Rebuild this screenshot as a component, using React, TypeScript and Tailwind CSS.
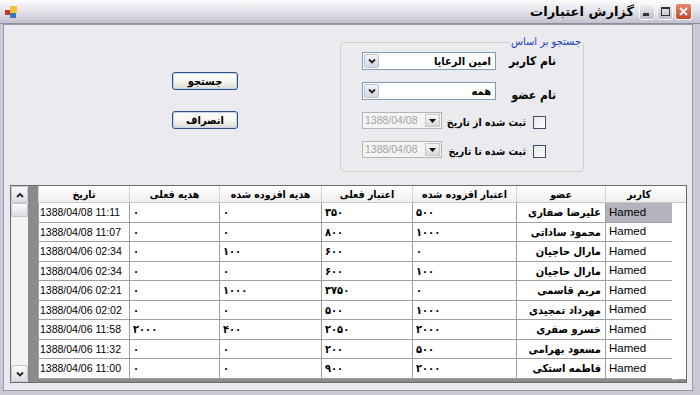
import React from 'react';

type Row = {
  user: string;
  member: string;
  addCredit: string;
  credit: string;
  addGift: string;
  gift: string;
  date: string;
};

const rows: Row[] = [
  { user: 'Hamed', member: 'علیرضا صفاری', addCredit: '۵۰۰', credit: '۳۵۰', addGift: '۰', gift: '۰', date: '1388/04/08 11:11' },
  { user: 'Hamed', member: 'محمود ساداتی', addCredit: '۱۰۰۰', credit: '۸۰۰', addGift: '۰', gift: '۰', date: '1388/04/08 11:07' },
  { user: 'Hamed', member: 'مارال حاجیان', addCredit: '۰', credit: '۶۰۰', addGift: '۱۰۰', gift: '۰', date: '1388/04/06 02:34' },
  { user: 'Hamed', member: 'مارال حاجیان', addCredit: '۱۰۰', credit: '۶۰۰', addGift: '۰', gift: '۰', date: '1388/04/06 02:34' },
  { user: 'Hamed', member: 'مریم قاسمی', addCredit: '۰', credit: '۳۷۵۰', addGift: '۱۰۰۰', gift: '۰', date: '1388/04/06 02:21' },
  { user: 'Hamed', member: 'مهرداد تمجیدی', addCredit: '۱۰۰۰', credit: '۵۰۰', addGift: '۰', gift: '۰', date: '1388/04/06 02:02' },
  { user: 'Hamed', member: 'خسرو صفری', addCredit: '۲۰۰۰', credit: '۲۰۵۰', addGift: '۴۰۰', gift: '۲۰۰۰', date: '1388/04/06 11:58' },
  { user: 'Hamed', member: 'مسعود بهرامی', addCredit: '۵۰۰', credit: '۲۰۰', addGift: '۰', gift: '۰', date: '1388/04/06 11:32' },
  { user: 'Hamed', member: 'فاطمه استکی', addCredit: '۲۰۰۰', credit: '۹۰۰', addGift: '۰', gift: '۰', date: '1388/04/06 11:00' },
];

// persian text: DejaVu has the arabic glyphs, condensed face keeps widths near Tahoma
const fa = "font-['DejaVu_Sans_Condensed','DejaVu_Sans',sans-serif] font-stretch-condensed whitespace-nowrap";
const en = "font-['Liberation_Sans',Arial,sans-serif] whitespace-nowrap";

function Chevron({ up = false }: { up?: boolean }) {
  return (
    <svg width="8" height="6" viewBox="0 0 8 6">
      <path
        d={up ? 'M1 5 L4 2 L7 5' : 'M1 1.5 L4 4.5 L7 1.5'}
        fill="none"
        stroke="#222"
        strokeWidth="1.8"
      />
    </svg>
  );
}

function Triangle() {
  return (
    <svg width="7" height="4" viewBox="0 0 7 4">
      <path d="M0 0 H7 L3.5 4 Z" fill="#111" />
    </svg>
  );
}

function ComboBox({ value }: { value: string }) {
  return (
    <div className="flex h-[18px] w-[134px] items-center border border-[#7f9db9] bg-white">
      <span className={`${fa} flex-1 pr-[4px] text-[11px] font-bold leading-none text-black`}>
        {value}
      </span>
      <div className="m-px flex h-[14px] w-[15px] items-center justify-center rounded-[2px] border border-[#b9c3d6] bg-gradient-to-b from-[#f4f5f8] to-[#d3d7e2]">
        <Chevron />
      </div>
    </div>
  );
}

function DatePicker() {
  return (
    <div className="flex h-[17px] w-[80px] items-center border border-[#b4b4b4] bg-[#f4f4f4]" dir="ltr">
      <span className={`${en} flex-1 pl-[2px] text-[10.5px] leading-none text-[#a3a3a3]`}>
        1388/04/08
      </span>
      <div className="m-px flex h-[13px] w-[15px] items-center justify-center border border-[#c8c8c8] bg-gradient-to-b from-[#f8f8f8] to-[#d8d8d8]">
        <Triangle />
      </div>
    </div>
  );
}

function CheckRow({ label }: { label: string }) {
  return (
    <div className="flex h-[17px] items-end justify-between">
      <div className="mr-[10px] flex items-center gap-[7px]">
        <div className="h-[13px] w-[13px] border border-[#3d4f6d] bg-gradient-to-br from-[#e6e6e6] to-white" />
        <span className={`${fa} text-[10.5px] font-bold leading-none text-black`}>{label}</span>
      </div>
      <DatePicker />
    </div>
  );
}

function XpButton({ label }: { label: string }) {
  return (
    <div className="flex h-[18px] w-[66px] items-center justify-center rounded-[3px] border border-[#2c4f84] bg-gradient-to-b from-white via-[#f5f5f2] to-[#dedcd2] shadow-[inset_0_0_0_1px_#c4d6f1]">
      <span className={`${fa} text-[11px] font-bold leading-none text-black`}>{label}</span>
    </div>
  );
}

function TitleButton({ kind }: { kind: 'min' | 'max' | 'close' }) {
  if (kind === 'close') {
    return (
      <div className="flex h-[17px] w-[17px] items-center justify-center rounded-[3px] border border-white bg-gradient-to-b from-[#e8866f] to-[#c3452b]">
        <svg width="11" height="11" viewBox="0 0 11 11">
          <path d="M2 2 L9 9 M9 2 L2 9" stroke="white" strokeWidth="2" />
        </svg>
      </div>
    );
  }
  return (
    <div className="flex h-[17px] w-[16px] items-center justify-center rounded-[3px] border border-white bg-gradient-to-b from-[#f4f4f8] to-[#babac9]">
      {kind === 'min' ? (
        <div className="mt-[6px] mr-[3px] h-[3px] w-[6px] bg-[#333]" />
      ) : (
        <div className="h-[9px] w-[9px] border border-t-2 border-[#333]" />
      )}
    </div>
  );
}

function ScrollButton({ up }: { up?: boolean }) {
  return (
    <div className="flex h-[17px] w-[17px] items-center justify-center rounded-[2px] border border-[#c3c6d2] bg-gradient-to-b from-[#fbfbfc] to-[#dcdde4]">
      <Chevron up={up} />
    </div>
  );
}

const cols: { key: keyof Row; title: string; w: string; cell: string }[] = [
  { key: 'user', title: 'کاربر', w: 'w-[67px]', cell: `${en} justify-start text-[11.5px] pl-[3px]` },
  { key: 'member', title: 'عضو', w: 'w-[89px]', cell: `${fa} justify-start font-bold text-[11px] pr-[4px]` },
  { key: 'addCredit', title: 'اعتبار افزوده شده', w: 'w-[104px]', cell: `${fa} justify-end font-bold text-[11px] pl-[3px]` },
  { key: 'credit', title: 'اعتبار فعلی', w: 'w-[91px]', cell: `${fa} justify-end font-bold text-[11px] pl-[3px]` },
  { key: 'addGift', title: 'هدیه افزوده شده', w: 'w-[102px]', cell: `${fa} justify-end font-bold text-[11px] pl-[3px]` },
  { key: 'gift', title: 'هدیه فعلی', w: 'w-[90px]', cell: `${fa} justify-end font-bold text-[11px] pl-[3px]` },
  { key: 'date', title: 'تاریخ', w: 'w-[91px]', cell: `${en} justify-start text-[10.5px] pl-[1px]` },
];

function Grid() {
  return (
    <div dir="rtl" className="flex h-[198px] w-[677px] border border-[#6b6b6b] bg-[#8b8b8b]">
      <div className="flex flex-1 flex-col items-start overflow-hidden">
        {/* header */}
        <div className="flex h-[17px] shrink-0 border-b border-[#c9c9c9] bg-gradient-to-b from-white to-[#efefef]">
          <div className="w-[14px]" />
          {cols.map((c) => (
            <div
              key={c.key}
              className={`${c.w} ${fa} flex items-center justify-center border-l border-[#d4d4d4] text-[10.5px] font-bold leading-none text-black`}
            >
              {c.title}
            </div>
          ))}
        </div>
        {rows.map((r, i) => (
          <div key={i} className={`flex shrink-0 ${i % 2 === 0 ? 'h-[20px]' : 'h-[19px]'}`}>
            <div className="flex w-[14px] items-end justify-end bg-white">
              <div className="mb-[-1px] h-px w-[6px] bg-[#b0b0b0]" />
            </div>
            {cols.map((c) => (
              <div
                key={c.key}
                className={`${c.w} ${c.cell} flex items-center border-b border-l border-[#a0a0a0] leading-none text-black ${
                  i === 0 && c.key === 'user' ? 'bg-[#b3b3bd]' : 'bg-white'
                }`}
                dir={c.key === 'date' || c.key === 'user' ? 'ltr' : 'rtl'}
              >
                {r[c.key]}
              </div>
            ))}
          </div>
        ))}
      </div>
      {/* vertical scrollbar */}
      <div className="flex w-[17px] flex-col bg-[#f3f3f5]">
        <ScrollButton up />
        <div className="h-[14px] w-[17px] rounded-[2px] border border-[#c3c6d2] bg-gradient-to-b from-[#fbfbfc] to-[#dcdde4]" />
        <div className="flex-1" />
        <ScrollButton />
      </div>
    </div>
  );
}

export default function App() {
  return (
    <div className="flex h-[395px] w-[700px] flex-col overflow-hidden bg-[#c9c9d6]">
      {/* Title bar */}
      <div
        dir="rtl"
        className="flex h-[24px] shrink-0 items-center gap-[2px] border-b border-[#8d8d9f] bg-gradient-to-b from-[#fdfdfe] via-[#e2e2ea] to-[#c3c3d1] pr-[8px] pl-[5px]"
      >
        <TitleButton kind="close" />
        <TitleButton kind="max" />
        <TitleButton kind="min" />
        <span className="mr-[3px] whitespace-nowrap font-['DejaVu_Sans',sans-serif] text-[13px] font-bold leading-none text-black">
          گزارش اعتبارات
        </span>
        <div className="flex-1" />
        <svg width="12" height="12" viewBox="0 0 12 12">
          <rect x="0" y="4" width="5" height="5" fill="#c0392b" />
          <rect x="5" y="0" width="7" height="7" fill="#f2c230" />
          <rect x="5" y="7" width="6" height="5" fill="#3a78c9" />
        </svg>
      </div>

      {/* Body */}
      <div className="flex flex-1 flex-col border-l-[3px] border-r-[7px] border-b-[5px] border-[#c9c9d6]">
        <div className="flex flex-1 flex-col border border-[#9a9aa8] bg-[#ebebef] pl-[6px] pr-[6px] pb-[7px]">
          <div dir="rtl" className="flex h-[160px] shrink-0 items-start pr-[102px]">
            {/* Group box */}
            <div className="relative mt-[17px] flex h-[130px] w-[244px] flex-col rounded-[4px] border border-[#d0d0c8] pt-[9px] pr-[27px] pl-[21px]">
              <span
                className={`${fa} absolute -top-[7px] right-[1px] bg-[#ebebef] px-[1px] text-[11px] leading-none text-[#1d3fc4]`}
              >
                جستجو بر اساس
              </span>
              <div className="flex h-[18px] items-center justify-between">
                <span className={`${fa} text-[12px] font-bold leading-none text-black`}>نام کاربر</span>
                <ComboBox value="امین الرعایا" />
              </div>
              <div className="mt-[12px] flex h-[18px] items-end justify-between">
                <span className={`${fa} mb-[-1px] text-[12px] font-bold leading-none text-black`}>نام عضو</span>
                <ComboBox value="همه" />
              </div>
              <div className="mt-[12px]">
                <CheckRow label="ثبت شده از تاریخ" />
              </div>
              <div className="mt-[12px]">
                <CheckRow label="ثبت شده تا تاریخ" />
              </div>
            </div>
            {/* Buttons */}
            <div className="mt-[47px] mr-[102px] flex flex-col gap-[21px]">
              <XpButton label="جستجو" />
              <XpButton label="انصراف" />
            </div>
          </div>
          <Grid />
        </div>
      </div>
    </div>
  );
}
